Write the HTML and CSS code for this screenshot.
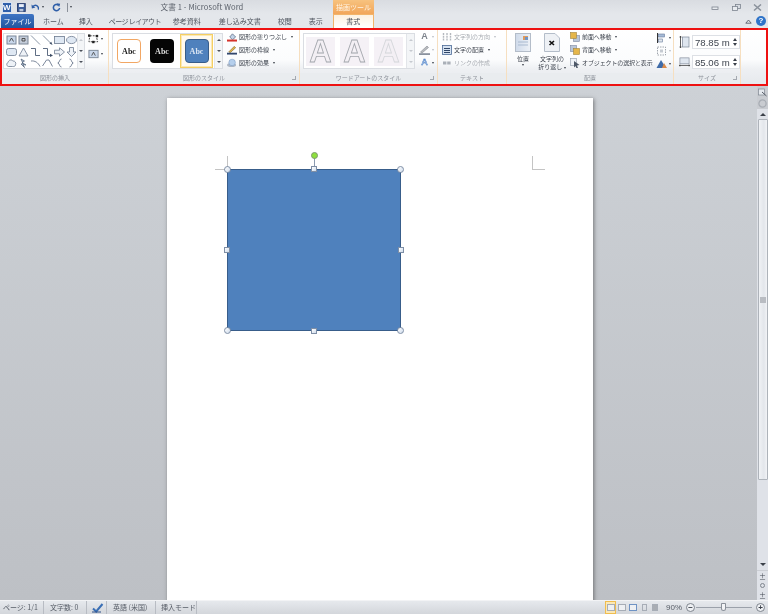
FILE: index.html
```html
<!DOCTYPE html>
<html lang="ja">
  <head>
    <meta charset="UTF-8" />
    <title>文書 1 - Microsoft Word</title>
    <link rel="stylesheet" href="styles.css">
  </head>
  <body>
    <div class="window">
      <div class="titlebar">
        <div class="qat">
          <span class="app-icon">W</span>
          <svg class="qat-icon qat-save" viewBox="0 0 9 9"><rect x="0.5" y="0.5" width="8" height="8" fill="#3c5f9c" stroke="#2b3f70"/><rect x="2" y="1" width="5" height="3" fill="#e8eef8"/><rect x="2.5" y="6" width="4" height="2.5" fill="#b9c6dc"/></svg>
          <svg class="qat-icon" viewBox="0 0 10 9"><path d="M2 3.5 C5 0.5 9 2 8.5 7" fill="none" stroke="#2e5ea8" stroke-width="1.6"/><path d="M0.5 1 L1 5.5 L5 4.5 Z" fill="#2e5ea8"/></svg>
          <span class="caret qat-caret"></span>
          <svg class="qat-icon qat-redo" viewBox="0 0 9 9"><path d="M6.5 2 A3.2 3.2 0 1 0 7.8 5" fill="none" stroke="#2e5ea8" stroke-width="1.6"/><path d="M4.6 0.2 L8.4 0.6 L7.4 4 Z" fill="#2e5ea8"/></svg>
          <span class="qat-sep"></span>
          <span class="caret qat-more"></span>
        </div>
        <div class="title">文書 1 - Microsoft Word</div>
        <div class="context-head">描画ツール</div>
        <div class="win-buttons">
          <svg viewBox="0 0 9 7"><rect x="1" y="3" width="6" height="2.4" fill="#e8ebef" stroke="#7d848f" stroke-width="0.8"/></svg>
          <svg viewBox="0 0 9 7"><rect x="3.5" y="0.5" width="5" height="4" fill="#d8dce2" stroke="#7d848f" stroke-width="0.8"/><rect x="0.5" y="2.5" width="5" height="4" fill="#e8ebef" stroke="#7d848f" stroke-width="0.8"/></svg>
          <svg viewBox="0 0 9 7"><path d="M1 0.5 L8 6.5 M8 0.5 L1 6.5" stroke="#8b929c" stroke-width="1.5"/></svg>
        </div>
      </div>

      <div class="tabs">
        <span class="tab tab-file">ファイル</span>
        <span class="tab tab-home">ホーム</span>
        <span class="tab tab-insert">挿入</span>
        <span class="tab tab-layout">ページ レイアウト</span>
        <span class="tab tab-refs">参考資料</span>
        <span class="tab tab-mail">差し込み文書</span>
        <span class="tab tab-review">校閲</span>
        <span class="tab tab-view">表示</span>
        <span class="tab tab-format">書式</span>
        <span class="tab-tools">
          <svg class="chevron" viewBox="0 0 7 5"><path d="M0.8 4.2 L3.5 1 L6.2 4.2 Z" fill="none" stroke="#59606b" stroke-width="0.9"/></svg>
          <span class="help">?</span>
        </span>
      </div>

      <div class="ribbon">
        <section class="group group-insert">
          <div class="group-body">
            <div class="gallery shapes">
              <div class="shape-grid">
                <svg viewBox="0 0 11 10"><rect x="1" y="1" width="9" height="8" fill="#c9d7ea" stroke="#7b8696"/><path d="M3.5 6.5 L5.5 3 L7.5 6.5" fill="none" stroke="#444" stroke-width="0.9"/></svg>
                <svg viewBox="0 0 11 10"><rect x="1" y="1" width="9" height="8" fill="#c3cbd8" stroke="#7b8696"/><path d="M4 3.5 H7 V6 H4 Z" fill="none" stroke="#444" stroke-width="0.9"/></svg>
                <svg viewBox="0 0 11 10"><path d="M1 0.5 L10 9.5" stroke="#6d7b90" stroke-width="0.8"/></svg>
                <svg viewBox="0 0 11 10"><path d="M1 0.5 L9 8.5" stroke="#6d7b90" stroke-width="0.8"/><path d="M10.5 10 L7.5 8.6 L9.2 6.8 Z" fill="#3e4e66"/></svg>
                <svg viewBox="0 0 11 10"><rect x="0.5" y="1.5" width="10" height="7" fill="#dfe8f3" stroke="#6d7b90" stroke-width="0.8"/></svg>
                <svg viewBox="0 0 11 10"><ellipse cx="5.5" cy="5" rx="5" ry="3.6" fill="#dfe8f3" stroke="#6d7b90" stroke-width="0.8"/></svg>
                <svg viewBox="0 0 11 10"><rect x="0.5" y="1.5" width="10" height="7" rx="2" fill="#dfe8f3" stroke="#6d7b90" stroke-width="0.8"/></svg>
                <svg viewBox="0 0 11 10"><path d="M5.5 1 L10 9 H1 Z" fill="#eef2f7" stroke="#6d7b90" stroke-width="0.8"/></svg>
                <svg viewBox="0 0 11 10"><path d="M1 1.5 H5.5 V8.5 H10" fill="none" stroke="#4e5e76" stroke-width="0.9"/></svg>
                <svg viewBox="0 0 11 10"><path d="M1 1.5 H5.5 V8.5 H8.5" fill="none" stroke="#4e5e76" stroke-width="0.9"/><path d="M11 8.5 L8 6.8 V10 Z" fill="#3e4e66"/></svg>
                <svg viewBox="0 0 11 10"><path d="M0.5 3.2 H5.5 V0.8 L10.5 5 L5.5 9.2 V6.8 H0.5 Z" fill="#eef2f7" stroke="#6d7b90" stroke-width="0.8"/></svg>
                <svg viewBox="0 0 11 10"><path d="M3.5 0.5 H7.5 V5 H10 L5.5 9.5 L1 5 H3.5 Z" fill="#eef2f7" stroke="#6d7b90" stroke-width="0.8"/></svg>
                <svg viewBox="0 0 11 10"><path d="M2.5 8.5 C0 8 0.5 5 2 4.6 C2.5 2 5.5 1 6.8 3 C9 2.5 10.5 5 9.5 6.8 C9.5 8.5 7.5 8.7 6.5 8.5 Z" fill="#eef2f7" stroke="#6d7b90" stroke-width="0.8"/></svg>
                <svg viewBox="0 0 11 10"><path d="M3 1 L6.5 3 L4 4.5 L8 7 L5 6.5 L6.5 9.5 L3 6 L5 5.5 Z" fill="#b9c6d8" stroke="#4e5e76" stroke-width="0.7"/></svg>
                <svg viewBox="0 0 11 10"><path d="M1 3 C5 2.5 8 4.5 10 8.5" fill="none" stroke="#6d7b90" stroke-width="0.9"/></svg>
                <svg viewBox="0 0 11 10"><path d="M0.5 8 L4.5 2 L7 2 L10.5 8.5" fill="none" stroke="#6d7b90" stroke-width="0.9"/></svg>
                <svg viewBox="0 0 11 10"><path d="M7.5 1 C5 1 6 4.5 3.8 5 C6 5.5 5 9 7.5 9" fill="none" stroke="#6d7b90" stroke-width="0.9"/></svg>
                <svg viewBox="0 0 11 10"><path d="M3.5 1 C6 1 5 4.5 7.2 5 C5 5.5 6 9 3.5 9" fill="none" stroke="#6d7b90" stroke-width="0.9"/></svg>
              </div>
              <div class="gallery-scroll">
                <span class="arrow-up off"></span>
                <span class="arrow-down"></span>
                <span class="arrow-more"></span>
              </div>
            </div>
            <div class="insert-side">
              <span class="side-button">
                <svg class="side-icon" viewBox="0 0 12 10"><path d="M2 1.5 H9 L10.5 8 H1 Z" fill="none" stroke="#222" stroke-width="0.9" stroke-dasharray="2 1.2"/><rect x="0" y="0" width="2.6" height="2.6" fill="#222"/><rect x="8.5" y="0.5" width="2.6" height="2.6" fill="#222"/><rect x="4.5" y="7" width="2.6" height="2.6" fill="#222"/></svg>
                <span class="caret"></span>
              </span>
              <span class="side-button">
                <svg class="side-icon" viewBox="0 0 12 10"><rect x="1" y="1" width="10" height="8" fill="#c9d7ea" stroke="#7b8696"/><path d="M4 6.8 L6 3 L8 6.8" fill="none" stroke="#444" stroke-width="0.9"/></svg>
                <span class="caret"></span>
              </span>
            </div>
          </div>
          <div class="group-label">図形の挿入</div>
        </section>

        <section class="group group-style">
          <div class="group-body">
            <div class="gallery styles">
              <div class="style-items">
                <span class="abc abc-outline">Abc</span>
                <span class="abc abc-black">Abc</span>
                <span class="abc-frame"><span class="abc abc-blue">Abc</span></span>
              </div>
              <div class="gallery-scroll">
                <span class="arrow-up"></span>
                <span class="arrow-down"></span>
                <span class="arrow-more"></span>
              </div>
            </div>
            <ul class="commands style-commands">
              <li>
                <svg class="cmd-icon" viewBox="0 0 11 10"><path d="M3 5 L6 1.5 L9.5 5 L6 8 Z" fill="#c3d3e8" stroke="#56657c" stroke-width="0.8"/><rect x="0" y="7.8" width="11" height="2.2" fill="#d6332c"/></svg>
                図形の塗りつぶし <span class="caret"></span>
              </li>
              <li>
                <svg class="cmd-icon" viewBox="0 0 11 10"><path d="M2 7 L8 1 L9.5 2.5 L3.5 8 Z" fill="#e5b64a" stroke="#6d5a2b" stroke-width="0.6"/><rect x="0" y="8" width="11" height="2" fill="#32486e"/></svg>
                図形の枠線 <span class="caret"></span>
              </li>
              <li>
                <svg class="cmd-icon" viewBox="0 0 11 10"><ellipse cx="5" cy="7.2" rx="5" ry="2.3" fill="#aeb7c4"/><circle cx="5.6" cy="4.4" r="3.6" fill="#b5cfec" stroke="#7d9bc2" stroke-width="0.6"/></svg>
                図形の効果 <span class="caret"></span>
              </li>
            </ul>
          </div>
          <div class="group-label">図形のスタイル<span class="launcher"></span></div>
        </section>

        <section class="group group-wordart">
          <div class="group-body">
            <div class="gallery wordart">
              <div class="wordart-items">
                <span class="art-a">A</span>
                <span class="art-a">A</span>
                <span class="art-a art-faint">A</span>
              </div>
              <div class="gallery-scroll">
                <span class="arrow-up off"></span>
                <span class="arrow-down off"></span>
                <span class="arrow-more off"></span>
              </div>
            </div>
            <div class="wordart-side">
              <span class="side-row"><span class="mini-a">A</span><span class="caret off"></span></span>
              <span class="side-row">
                <svg class="side-icon" viewBox="0 0 11 10"><path d="M1.5 7 L8 1 L9.5 2.5 L3 8 Z" fill="#b9bcc0" stroke="#868a90" stroke-width="0.6"/><rect x="0" y="8.2" width="11" height="1.8" fill="#8a929e"/></svg>
                <span class="caret off"></span>
              </span>
              <span class="side-row"><span class="mini-a mini-blue">A</span><span class="caret"></span></span>
            </div>
          </div>
          <div class="group-label">ワードアートのスタイル<span class="launcher"></span></div>
        </section>

        <section class="group group-text">
          <ul class="commands text-commands group-body">
            <li class="off">
              <svg class="cmd-icon" viewBox="0 0 10 10"><path d="M1.5 1 V9 M5 1 V9 M8.5 1 V9" stroke="#b4b8be" stroke-width="1.4" stroke-dasharray="2 0.8"/></svg>
              文字列の方向 <span class="caret off"></span>
            </li>
            <li>
              <svg class="cmd-icon" viewBox="0 0 10 10"><rect x="0.5" y="0.5" width="9" height="9" fill="#d6e2f0" stroke="#4d6b97" stroke-width="0.8"/><path d="M2 3.5 H8 M2 5.5 H8 M2 7.5 H8" stroke="#2f4567"/></svg>
              文字の配置 <span class="caret"></span>
            </li>
            <li class="off">
              <svg class="cmd-icon" viewBox="0 0 10 10"><path d="M1 5 H9" stroke="#aab0b8" stroke-width="3" stroke-dasharray="3.4 0.8"/></svg>
              リンクの作成
            </li>
          </ul>
          <div class="group-label">テキスト</div>
        </section>

        <section class="group group-arrange">
          <div class="group-body">
            <div class="big-button pos-button">
              <svg class="big-icon" viewBox="0 0 16 19"><defs><linearGradient id="sheet" x1="0" y1="0" x2="1" y2="0"><stop offset="0" stop-color="#cfdaea"/><stop offset="1" stop-color="#eef2f7"/></linearGradient></defs><rect x="0.5" y="0.5" width="15" height="18" fill="url(#sheet)" stroke="#b4bdc9"/><rect x="8" y="3" width="5" height="4" fill="#dd9a5e"/><rect x="10" y="4" width="3" height="3" fill="#6f94c4"/><path d="M3 9 H13 M3 12 H13" stroke="#a9bad0"/></svg>
              <span>位置</span>
              <span class="caret"></span>
            </div>
            <div class="big-button wrap-button">
              <svg class="big-icon" viewBox="0 0 16 19"><path d="M0.5 0.5 H11 L15.5 5 V18.5 H0.5 Z" fill="#eef1f5" stroke="#b4bdc9"/><path d="M5.5 8 L10 12 M10 8 L5.5 12" stroke="#111" stroke-width="1.6"/></svg>
              <span>文字列の</span>
              <span>折り返し <i class="caret"></i></span>
            </div>
            <ul class="commands arrange-commands">
              <li>
                <svg class="cmd-icon" viewBox="0 0 10 10"><rect x="3.5" y="3.5" width="6" height="6" fill="#b9c6d8" stroke="#7c88a0" stroke-width="0.6"/><rect x="0.5" y="0.5" width="6" height="6" fill="#e5b64a" stroke="#a1843c" stroke-width="0.6"/></svg>
                前面へ移動 <span class="caret"></span>
              </li>
              <li>
                <svg class="cmd-icon" viewBox="0 0 10 10"><rect x="0.5" y="0.5" width="6" height="6" fill="#b9c6d8" stroke="#7c88a0" stroke-width="0.6"/><rect x="3.5" y="3.5" width="6" height="6" fill="#e5b64a" stroke="#a1843c" stroke-width="0.6"/></svg>
                背面へ移動 <span class="caret"></span>
              </li>
              <li>
                <svg class="cmd-icon" viewBox="0 0 10 10"><rect x="0.5" y="0.5" width="6" height="7" fill="#eef2f7" stroke="#8c96a6" stroke-width="0.6"/><path d="M4 3 L9.5 7 L7 7.5 L8 10 L6.4 10 L5.5 8 L4 9.5 Z" fill="#4d5868"/></svg>
                オブジェクトの選択と表示
              </li>
            </ul>
            <div class="arrange-side">
              <span class="side-row">
                <svg class="side-icon" viewBox="0 0 10 10"><path d="M1 0 V10" stroke="#333"/><rect x="2" y="1" width="6" height="3" fill="#a5bad6" stroke="#66799a" stroke-width="0.6"/><rect x="2" y="6" width="4" height="3" fill="#e0e5ec" stroke="#66799a" stroke-width="0.6"/></svg>
                <span class="caret"></span>
              </span>
              <span class="side-row">
                <svg class="side-icon" viewBox="0 0 10 10"><rect x="1" y="1" width="8" height="8" fill="none" stroke="#a0a6ae" stroke-dasharray="1.5 1"/><rect x="3.5" y="3.5" width="3" height="3" fill="#c6cbd2"/></svg>
                <span class="caret off"></span>
              </span>
              <span class="side-row">
                <svg class="side-icon" viewBox="0 0 11 10"><path d="M5 1 L10 9 H0.5 Z" fill="#3f6ba8"/><path d="M8 4 L11 9 H6 Z" fill="#d98a4b"/></svg>
                <span class="caret"></span>
              </span>
            </div>
          </div>
          <div class="group-label">配置</div>
        </section>

        <section class="group group-size">
          <div class="group-body size-rows">
            <div class="size-row">
              <svg class="size-icon" viewBox="0 0 10 12"><rect x="3" y="1" width="6.5" height="10" fill="#dfe6ef" stroke="#7c8696" stroke-width="0.7"/><path d="M1 0 V12 M0 1 H2 M0 11 H2" stroke="#333" stroke-width="0.8"/></svg>
              <div class="spin"><span class="spin-value">78.85 mm</span><span class="spin-arrows"></span></div>
            </div>
            <div class="size-row">
              <svg class="size-icon" viewBox="0 0 12 10"><rect x="1" y="0.5" width="10" height="6.5" fill="#dfe6ef" stroke="#7c8696" stroke-width="0.7"/><path d="M0 8.8 H12 M1 7.8 V9.8 M11 7.8 V9.8" stroke="#333" stroke-width="0.8"/></svg>
              <div class="spin"><span class="spin-value">85.06 mm</span><span class="spin-arrows"></span></div>
            </div>
          </div>
          <div class="group-label">サイズ<span class="launcher"></span></div>
        </section>
      </div>

      <div class="workspace">
        <div class="page-area">
          <div class="page">
            <span class="crop crop-left"></span>
            <span class="crop crop-right"></span>
            <div class="shape">
              <span class="rotate-line"></span>
              <span class="rotate-dot"></span>
              <span class="handle tl"></span>
              <span class="handle tr"></span>
              <span class="handle bl"></span>
              <span class="handle br"></span>
              <span class="handle square tc"></span>
              <span class="handle square bc"></span>
              <span class="handle square ml"></span>
              <span class="handle square mr"></span>
            </div>
          </div>
        </div>
        <div class="scrollbar">
          <div class="ruler-toggle">
            <svg viewBox="0 0 9 9"><rect x="0.5" y="1" width="6" height="6" fill="#e4e8ed" stroke="#7f8791" stroke-width="0.7"/><path d="M4 4 L8.5 8" stroke="#555c66"/></svg>
            <svg viewBox="0 0 9 9"><circle cx="4.5" cy="4.5" r="3.6" fill="none" stroke="#a8adb4" stroke-width="1.3"/></svg>
          </div>
          <span class="scroll-up"></span>
          <div class="scroll-thumb"><span class="grip"></span></div>
          <div class="scroll-rest"></div>
          <span class="scroll-down"></span>
          <div class="browse">
            <span>±</span>
            <span class="browse-dot"></span>
            <span>±</span>
          </div>
        </div>
      </div>

      <div class="statusbar">
        <span class="stat stat-page">ページ: 1/1</span>
        <span class="stat stat-count">文字数: 0</span>
        <span class="stat stat-spell">
          <svg viewBox="0 0 12 10"><path d="M1 5.5 L4.2 8.5 L10.5 1" fill="none" stroke="#3a6fb5" stroke-width="2"/><path d="M0 9 H9" stroke="#2c4f86"/></svg>
        </span>
        <span class="stat stat-lang">英語 (米国)</span>
        <span class="stat stat-mode">挿入モード</span>
        <div class="status-right">
          <span class="view view-on"><i></i></span>
          <span class="view"><i></i></span>
          <span class="view"><i class="view-blue"></i></span>
          <span class="view"><i class="view-thin"></i></span>
          <span class="view"><i class="view-dark"></i></span>
          <span class="zoom-value">90%</span>
          <span class="zoom-btn">−</span>
          <span class="zoom-track"><span class="zoom-thumb"></span></span>
          <span class="zoom-btn">+</span>
        </div>
      </div>
    </div>
  </body>
</html>
```

FILE: styles.css
```css
* {
  box-sizing: border-box;
}
html,
body {
  margin: 0;
  height: 100%;
  overflow: hidden;
}
body {
  font-family: "Noto Sans CJK JP", "Liberation Sans", sans-serif;
  font-size: 7px;
  color: #4a505a;
}
ul {
  list-style: none;
  margin: 0;
  padding: 0;
}
svg {
  display: block;
}
.window {
  width: 768px;
  height: 614px;
  display: flex;
  flex-direction: column;
  background: #e3e6ea;
  filter: blur(0.3px);
}

/* title bar */
.titlebar {
  height: 14px;
  display: flex;
  background: linear-gradient(#d9dce1, #e4e7eb);
}
.qat {
  width: 72px;
  display: flex;
  align-items: center;
  padding-left: 2px;
}
.app-icon {
  width: 10px;
  height: 11px;
  background: #2f5faa;
  border: 1px solid #d7e2f2;
  color: #fff;
  font: bold 8px/9px "Liberation Sans", sans-serif;
  text-align: center;
  margin-right: 5px;
}
.qat-icon {
  width: 9px;
  height: 9px;
  margin-right: 6px;
}
.qat-save {
  margin-right: 5px;
}
.qat-caret {
  margin: 0 8px 0 -3px;
}
.qat-redo {
  margin-right: 6px;
}
.qat-sep {
  width: 1px;
  height: 9px;
  background: #8a9099;
  margin-right: 1px;
}
.qat-more {
  margin-left: 1px;
}
.title {
  width: 260px;
  text-align: center;
  font-size: 7.6px;
  line-height: 14px;
  color: #5a606a;
  letter-spacing: 0.1px;
}
.context-head {
  width: 41px;
  margin-left: 1px;
  background: linear-gradient(#f7c27e, #f2a65a);
  color: #fff4e4;
  font-size: 7px;
  line-height: 14px;
  text-align: center;
}
.win-buttons {
  margin-left: auto;
  display: flex;
  align-items: center;
  gap: 12px;
  padding-right: 6px;
}
.win-buttons svg {
  width: 9px;
  height: 7px;
}

/* tabs */
.tabs {
  height: 14px;
  display: flex;
  background: #e4e7eb;
  line-height: 14px;
  color: #4e545e;
}
.tab {
  display: block;
  white-space: nowrap;
}
.tab-file {
  width: 33px;
  margin-left: 1px;
  text-align: center;
  color: #fff;
  background: linear-gradient(#3f75c4, #23569f);
  border-radius: 2px 2px 0 0;
}
.tab-home {
  margin-left: 9px;
}
.tab-insert {
  margin-left: 15px;
}
.tab-layout {
  margin-left: 16px;
  width: 48px;
  letter-spacing: -0.6px;
}
.tab-refs {
  margin-left: 16px;
}
.tab-mail {
  margin-left: 18px;
}
.tab-review {
  margin-left: 17px;
}
.tab-view {
  margin-left: 17px;
}
.tab-format {
  width: 41px;
  margin-left: 10px;
  text-align: center;
  background: linear-gradient(#fdf1e0, #fff);
  border: 1px solid #f2b46a;
  border-bottom: 0;
  line-height: 13px;
  color: #444a54;
}
.tab-tools {
  margin-left: auto;
  display: flex;
  align-items: center;
  gap: 4px;
  padding-right: 2px;
}
.chevron {
  width: 7px;
  height: 5px;
}
.help {
  width: 10px;
  height: 10px;
  border-radius: 50%;
  background: #2f74c9;
  color: #fff;
  font: bold 8px/10px "Liberation Sans", sans-serif;
  text-align: center;
}

/* ribbon */
.ribbon {
  height: 58px;
  display: flex;
  border: 2px solid #ee1111;
  background: linear-gradient(#fff 0, #fbfcfd 55%, #eef0f3 72%, #e6e9ed 100%);
  color: #3f454f;
  font-size: 6px;
}
.group {
  display: flex;
  flex-direction: column;
  border-right: 1px solid #f6dfc0;
}
.group-insert {
  width: 107px;
}
.group-style {
  width: 191px;
}
.group-wordart {
  width: 138px;
}
.group-text {
  width: 69px;
}
.group-arrange {
  width: 167px;
}
.group-size {
  width: 67px;
}
.group-body {
  height: 43px;
  display: flex;
  padding-top: 3px;
}
.group-label {
  position: relative;
  height: 11px;
  text-align: center;
  line-height: 10px;
  color: #8d929a;
  background: #e9ecef;
}
.launcher {
  position: absolute;
  right: 3px;
  top: 3px;
  width: 4px;
  height: 4px;
  border-right: 1px solid #a3a8af;
  border-bottom: 1px solid #a3a8af;
}

/* galleries */
.gallery {
  height: 36px;
  display: flex;
  border: 1px solid #dadde2;
  background: #fff;
}
.shapes {
  width: 82px;
  margin-left: 1px;
}
.shape-grid {
  width: 73px;
  padding: 0 0 0 1px;
  display: grid;
  grid-template-columns: repeat(6, 12px);
  grid-template-rows: repeat(3, 11.6px);
}
.shape-grid svg {
  width: 11px;
  height: 10px;
  margin: 1px 0 0 1px;
}
.gallery-scroll {
  width: 8px;
  margin-left: auto;
  display: grid;
  grid-template-rows: 1fr 1fr 1fr;
  border-left: 1px solid #e2e5e9;
  background: #f3f5f7;
  justify-items: center;
  align-items: center;
}
.arrow-up,
.arrow-down,
.arrow-more {
  width: 0;
  height: 0;
  border-left: 2px solid transparent;
  border-right: 2px solid transparent;
}
.arrow-up {
  border-bottom: 2.5px solid #4b505a;
}
.arrow-down,
.arrow-more {
  border-top: 2.5px solid #4b505a;
}
.arrow-up.off {
  border-bottom-color: #c6cad0;
}
.arrow-down.off,
.arrow-more.off {
  border-top-color: #c6cad0;
}
.caret {
  display: inline-block;
  width: 0;
  height: 0;
  border-left: 1.5px solid transparent;
  border-right: 1.5px solid transparent;
  border-top: 2px solid #3b4049;
  vertical-align: middle;
}
.caret.off {
  border-top-color: #b9bdc3;
}
.insert-side {
  margin-left: 3px;
  display: flex;
  flex-direction: column;
  gap: 5px;
  padding-top: 1px;
}
.side-button,
.side-row {
  display: flex;
  align-items: center;
  gap: 2px;
}
.side-icon {
  width: 11px;
  height: 10px;
}

/* shape styles */
.styles {
  width: 111px;
  margin-left: 3px;
}
.style-items {
  flex: 1;
  display: flex;
  align-items: center;
  padding-left: 4px;
}
.abc {
  width: 24px;
  height: 24px;
  display: flex;
  align-items: center;
  justify-content: center;
  border-radius: 4px;
  font: bold 8px "Liberation Serif", serif;
}
.abc-outline {
  background: #fff;
  border: 1px solid #f2a764;
  color: #222;
}
.abc-black {
  margin-left: 9px;
  background: #050505;
  color: #dcdcdc;
}
.abc-frame {
  margin-left: 6px;
  width: 33px;
  height: 34px;
  display: flex;
  align-items: center;
  justify-content: center;
  border: 1px solid #f5cf63;
  box-shadow: inset 0 0 0 1px #fbe9b5;
  background: #fffaf0;
}
.abc-blue {
  background: #4f81bd;
  border: 1px solid #385d8a;
  color: #dbe6f3;
}
.commands {
  margin-top: -3px;
}
.commands li {
  display: flex;
  align-items: center;
  height: 13px;
  gap: 2px;
  white-space: nowrap;
}
.commands .caret {
  margin-left: 2px;
}
.commands .off {
  color: #a9adb3;
}
.cmd-icon {
  width: 10px;
  height: 10px;
  flex: none;
}
.style-commands {
  margin-left: 4px;
}

/* word art */
.wordart {
  width: 112px;
  margin-left: 3px;
}
.wordart-items {
  flex: 1;
  display: flex;
  align-items: center;
  gap: 5px;
  padding-left: 2px;
}
.art-a {
  width: 29px;
  height: 29px;
  background: #f5f1f6;
  display: flex;
  align-items: center;
  justify-content: center;
  font: bold 31px/29px "Liberation Sans", sans-serif;
  color: #f3eff4;
  -webkit-text-stroke: 0.8px #a4a7ad;
}
.art-faint {
  -webkit-text-stroke-color: #d5d7db;
}
.wordart-side {
  margin: -2px 0 0 4px;
  display: flex;
  flex-direction: column;
  gap: 2px;
}
.side-row {
  height: 11px;
}
.mini-a {
  width: 11px;
  text-align: center;
  font: bold 9px/11px "Liberation Sans", sans-serif;
  color: #7d838c;
}
.mini-blue {
  color: #a9c7ee;
  -webkit-text-stroke: 0.4px #3f74bd;
}

/* text group */
.text-commands {
  display: block;
  margin: 0 0 0 4px;
  padding-top: 0;
}

/* arrange */
.big-button {
  display: flex;
  flex-direction: column;
  align-items: center;
  line-height: 8px;
  white-space: nowrap;
}
.big-button .caret {
  margin-top: 1px;
}
.big-icon {
  width: 16px;
  height: 19px;
  margin-bottom: 3px;
}
.pos-button {
  width: 18px;
  margin-left: 7px;
}
.wrap-button {
  width: 30px;
  margin-left: 5px;
}
.arrange-commands {
  margin-left: 3px;
  width: 84px;
  letter-spacing: -0.12px;
}
.arrange-side {
  margin: -1px 0 0 2px;
  display: flex;
  flex-direction: column;
  gap: 2px;
}

/* size */
.size-rows {
  flex-direction: column;
  gap: 6px;
  padding: 5px 0 0 5px;
}
.size-row {
  display: flex;
  align-items: center;
  gap: 2px;
}
.size-icon {
  width: 11px;
  height: 12px;
}
.spin {
  width: 48px;
  height: 14px;
  display: flex;
  align-items: center;
  border: 1px solid #dde0e5;
  background: #fff;
  padding-left: 2px;
  font: 9.6px "Liberation Sans", sans-serif;
  color: #3f454f;
}
.spin-value {
  width: 35px;
  overflow: hidden;
  white-space: nowrap;
}
.spin-arrows {
  width: 0;
  height: 8px;
  margin-left: 4px;
  border-left: 1.5px solid transparent;
  border-right: 1.5px solid transparent;
  position: relative;
}
.spin-arrows::before,
.spin-arrows::after {
  content: "";
  position: absolute;
  left: -2px;
  border-left: 2px solid transparent;
  border-right: 2px solid transparent;
}
.spin-arrows::before {
  top: 0;
  border-bottom: 3px solid #3b4049;
}
.spin-arrows::after {
  bottom: 0;
  border-top: 3px solid #3b4049;
}

/* document area */
.workspace {
  height: 514px;
  display: flex;
  overflow: hidden;
}
.page-area {
  flex: 1;
  padding: 12px 0 0 167px;
  background: linear-gradient(#cdd1d6, #bdc0c5);
  overflow: hidden;
}
.page {
  position: relative;
  width: 426px;
  height: 620px;
  background: #fff;
  padding: 71px 0 0 60px;
  box-shadow: 1px 1px 4px rgba(60, 60, 60, 0.6);
}
.crop {
  position: absolute;
  top: 58px;
  width: 13px;
  height: 14px;
}
.crop-left {
  left: 48px;
  border-right: 1px solid #c4c4c4;
  border-bottom: 1px solid #c4c4c4;
}
.crop-right {
  left: 365px;
  border-left: 1px solid #c4c4c4;
  border-bottom: 1px solid #c4c4c4;
}
.shape {
  position: relative;
  width: 174px;
  height: 162px;
  background: #4f81bd;
  border: 1px solid #385d8a;
}
.handle {
  position: absolute;
  width: 7px;
  height: 7px;
  background: linear-gradient(135deg, #fff, #cfdcec);
  border: 1px solid #7f8fa6;
  border-radius: 50%;
}
.handle.square {
  width: 6px;
  height: 6px;
  border-radius: 0;
}
.tl {
  left: -4px;
  top: -4px;
}
.tr {
  right: -4px;
  top: -4px;
}
.bl {
  left: -4px;
  bottom: -4px;
}
.br {
  right: -4px;
  bottom: -4px;
}
.tc {
  left: 83px;
  top: -4px;
}
.bc {
  left: 83px;
  bottom: -4px;
}
.ml {
  left: -4px;
  top: 77px;
}
.mr {
  right: -4px;
  top: 77px;
}
.rotate-line {
  position: absolute;
  left: 86px;
  top: -13px;
  width: 1px;
  height: 12px;
  background: #8a9ab0;
}
.rotate-dot {
  position: absolute;
  left: 83px;
  top: -18px;
  width: 7px;
  height: 7px;
  border-radius: 50%;
  background: #8ee03c;
  border: 1px solid #7f9a72;
}

/* scrollbar */
.scrollbar {
  width: 11px;
  display: flex;
  flex-direction: column;
  align-items: center;
  background: #dfe2e8;
}
.ruler-toggle {
  height: 23px;
  width: 100%;
  display: flex;
  flex-direction: column;
  align-items: center;
  gap: 2px;
  padding-top: 2px;
  background: #c9ccd1;
}
.ruler-toggle svg {
  width: 9px;
  height: 9px;
}
.scroll-up {
  width: 0;
  height: 0;
  margin: 4px 0 2px;
  border-left: 3px solid transparent;
  border-right: 3px solid transparent;
  border-bottom: 3px solid #3b4049;
}
.scroll-thumb {
  width: 10px;
  height: 361px;
  margin-top: 1px;
  border: 1px solid #aeb3ba;
  border-radius: 1px;
  background: linear-gradient(90deg, #f0f2f5, #e3e6eb 60%, #f2f3f6);
  position: relative;
}
.grip {
  position: absolute;
  left: 1px;
  top: 177px;
  width: 6px;
  height: 6px;
  background: #b9bcc2;
}
.scroll-rest {
  flex: 1;
  width: 100%;
}
.scroll-down {
  width: 0;
  height: 0;
  margin-bottom: 4px;
  border-left: 3px solid transparent;
  border-right: 3px solid transparent;
  border-top: 3px solid #3b4049;
}
.browse {
  height: 30px;
  width: 100%;
  display: flex;
  flex-direction: column;
  align-items: center;
  justify-content: space-around;
  font-size: 7px;
  line-height: 8px;
  color: #444a54;
  background: #dfe2e8;
  border-top: 1px solid #cbced4;
}
.browse-dot {
  width: 5px;
  height: 5px;
  border-radius: 50%;
  border: 1px solid #7f858e;
}

/* status bar */
.statusbar {
  height: 14px;
  display: flex;
  align-items: center;
  background: linear-gradient(#e6e9ed, #d3d6db);
  border-top: 1px solid #f2f3f5;
  color: #565c66;
  line-height: 13px;
}
.stat {
  height: 13px;
  white-space: nowrap;
  border-right: 1px solid #b8bcc3;
}
.stat-page {
  width: 44px;
  padding-left: 3px;
}
.stat-count {
  width: 43px;
  padding-left: 6px;
}
.stat-spell {
  width: 20px;
  padding: 2px 0 0 5px;
}
.stat-spell svg {
  width: 12px;
  height: 10px;
}
.stat-lang {
  width: 49px;
  padding-left: 6px;
}
.stat-mode {
  width: 41px;
  padding-left: 5px;
}
.status-right {
  margin-left: auto;
  display: flex;
  align-items: center;
  gap: 1px;
  padding-right: 3px;
}
.view {
  width: 10px;
  height: 13px;
  display: flex;
  align-items: center;
  justify-content: center;
}
.view i {
  display: block;
  width: 8px;
  height: 7px;
  border: 1px solid #a7adb6;
  background: #eef0f3;
}
.view .view-blue {
  border-color: #6f93c4;
}
.view .view-thin {
  width: 5px;
  background: transparent;
}
.view .view-dark {
  width: 6px;
  background: #a9adb3;
}
.view-on {
  width: 11px;
  border: 1px solid #f0bd4f;
  background: #fbe8b6;
}
.zoom-value {
  width: 16px;
  margin: 0 3px 0 5px;
  font: 8px "Liberation Sans", sans-serif;
  color: #5a606a;
}
.zoom-btn {
  width: 9px;
  height: 9px;
  border-radius: 50%;
  border: 1px solid #7f858e;
  background: #eef0f3;
  font: bold 8px/7px "Liberation Sans", sans-serif;
  text-align: center;
  color: #3b4049;
}
.zoom-track {
  position: relative;
  width: 56px;
  height: 1px;
  margin-right: 3px;
  background: #9ba1aa;
}
.zoom-thumb {
  position: absolute;
  left: 25px;
  top: -4px;
  width: 5px;
  height: 8px;
  background: #f3f4f6;
  border: 1px solid #8a9099;
  border-radius: 1px 1px 3px 3px;
}
```
